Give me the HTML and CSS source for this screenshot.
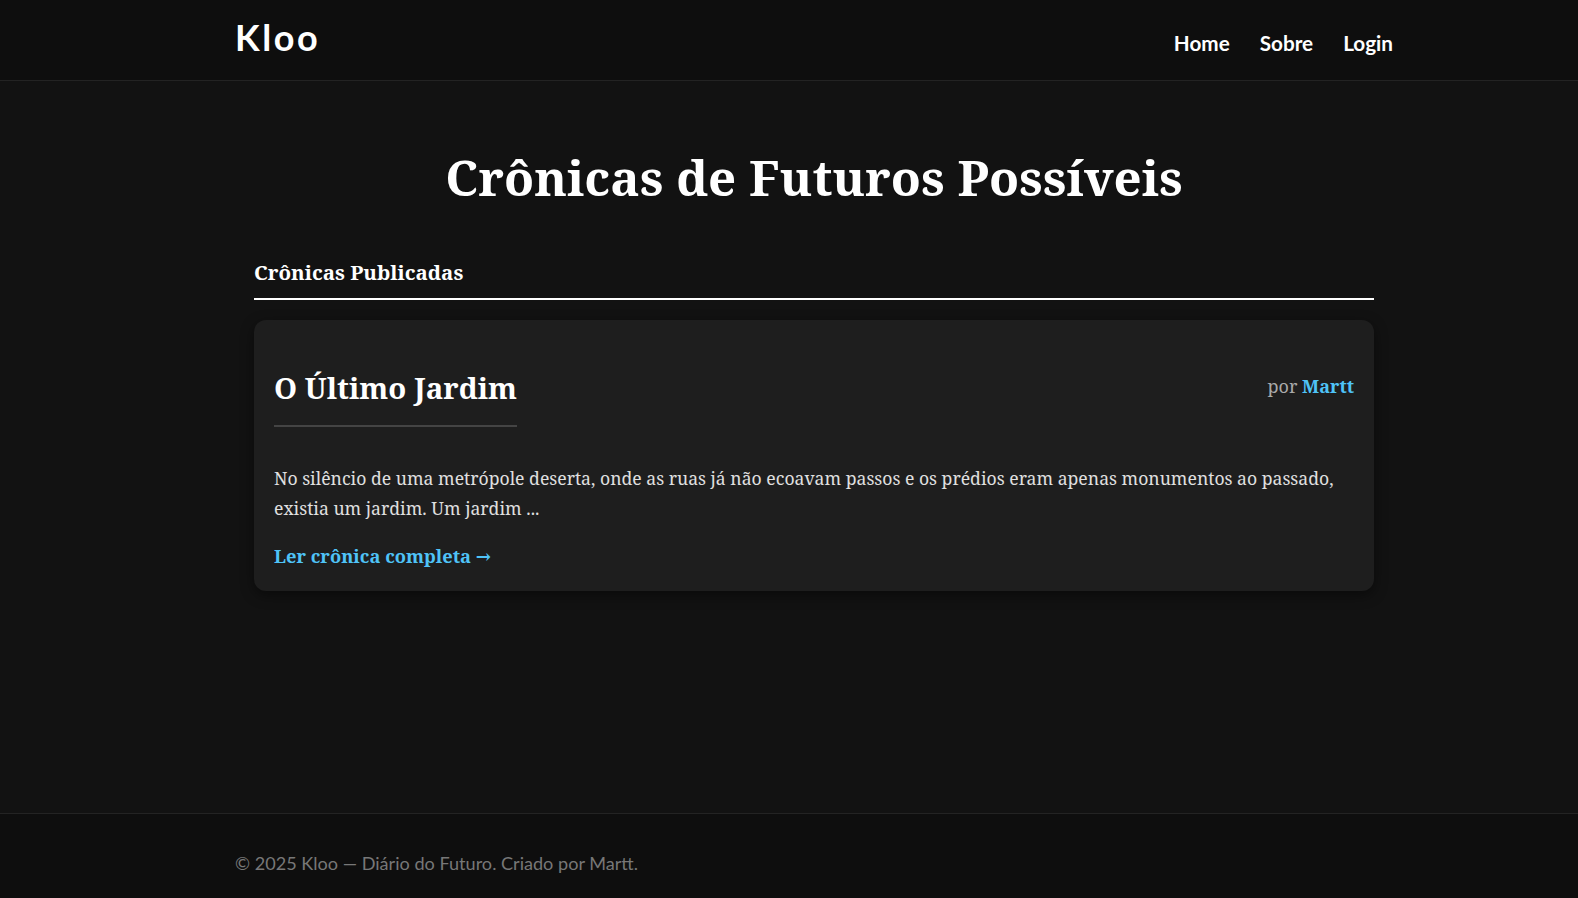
FILE: index.html
```html
<!DOCTYPE html>
<html lang="pt-BR">
<head>
<meta charset="utf-8">
<title>Kloo — Crônicas de Futuros Possíveis</title>
<link rel="stylesheet" href="styles.css">
</head>
<body>
  <header class="site-header">
    <div class="header-inner">
      <a class="logo" href="#">Kloo</a>
      <nav class="nav">
        <a href="#">Home</a>
        <a href="#">Sobre</a>
        <a href="#">Login</a>
      </nav>
    </div>
  </header>

  <main class="site-main">
    <div class="content">
      <h1 class="page-title">Crônicas de Futuros Possíveis</h1>
      <h3 class="section-title">Crônicas Publicadas</h3>

      <article class="card">
        <div class="card-head">
          <h2 class="card-title">O Último Jardim</h2>
          <div class="card-meta">por <strong class="author">Martt</strong></div>
        </div>
        <p class="card-excerpt">No silêncio de uma metrópole deserta, onde as ruas já não ecoavam passos e os prédios eram apenas monumentos ao passado, existia um jardim. Um jardim ...</p>
        <a class="read-more" href="#">Ler crônica completa →</a>
      </article>
    </div>
  </main>

  <footer class="site-footer">
    <div class="footer-inner">© 2025 Kloo — Diário do Futuro. Criado por Martt.</div>
  </footer>
</body>
</html>
```
FILE: styles.css
```css
html, body {
  margin: 0;
  padding: 0;
}

body {
  background: #121212;
  color: #e0e0e0;
  font-family: "Noto Serif", "DejaVu Serif", serif;
  display: flex;
  flex-direction: column;
  min-height: 100vh;
}

a {
  text-decoration: none;
}

/* ---------- Header ---------- */
.site-header {
  background: #0e0e0e;
  border-bottom: 1px solid #232323;
  padding-left: 50px;
  font-family: Lato, "Open Sans", sans-serif;
}

.header-inner {
  max-width: 1158px;
  margin: 0 auto;
  height: 80px;
  box-sizing: border-box;
  padding-top: 19px;
  display: flex;
  justify-content: space-between;
  align-items: baseline;
}

.logo {
  color: #ffffff;
  font-size: 36px;
  font-weight: 700;
  line-height: 1;
  letter-spacing: 2.6px;
}

.nav {
  display: flex;
  gap: 30px;
}

.nav a {
  color: #ffffff;
  font-size: 20.7px;
  font-weight: 700;
  line-height: 1;
}

/* ---------- Main ---------- */
.site-main {
  flex: 1;
  padding-left: 50px;
}

.content {
  max-width: 1120px;
  margin: 0 auto;
  padding-top: 66px;
  padding-bottom: 40px;
}

.page-title {
  margin: 0 0 54px;
  text-align: center;
  color: #ffffff;
  font-size: 49.2px;
  font-weight: 700;
  line-height: 1.2;
}

.section-title {
  margin: 0 0 20px;
  padding-bottom: 13.5px;
  border-bottom: 2px solid #ffffff;
  color: #ffffff;
  font-size: 20.5px;
  font-weight: 700;
  line-height: 1.2;
}

.card {
  background: #1e1e1e;
  border-radius: 12px;
  padding: 20px;
  box-shadow: 0 4px 14px rgba(0, 0, 0, 0.45);
  line-height: 1.7;
}

.card-head {
  display: flex;
  justify-content: space-between;
  align-items: flex-start;
  margin-bottom: 37px;
}

.card-title {
  margin: 24px 0 0;
  padding-bottom: 10.5px;
  border-bottom: 2px solid #444444;
  color: #ffffff;
  font-size: 29.4px;
  font-weight: 700;
  line-height: 1.7;
}

.card-meta {
  margin-top: 30.7px;
  color: #aaaaaa;
  font-size: 18px;
  line-height: 1.7;
}

.author {
  color: #4fc3f7;
  font-weight: 700;
}

.card-excerpt {
  margin: 0 0 16.3px;
  color: #e0e0e0;
  font-size: 17.6px;
  line-height: 1.7;
}

.read-more {
  display: inline-block;
  color: #4fc3f7;
  font-size: 18.3px;
  font-weight: 700;
  line-height: 1.7;
}

/* ---------- Footer ---------- */
.site-footer {
  background: #0e0e0e;
  border-top: 1px solid #232323;
  padding: 39px 0 23px 50px;
  font-family: Lato, "Open Sans", sans-serif;
}

.footer-inner {
  max-width: 1158px;
  margin: 0 auto;
  color: #777777;
  font-size: 18.1px;
  line-height: 1.2;
}
```
